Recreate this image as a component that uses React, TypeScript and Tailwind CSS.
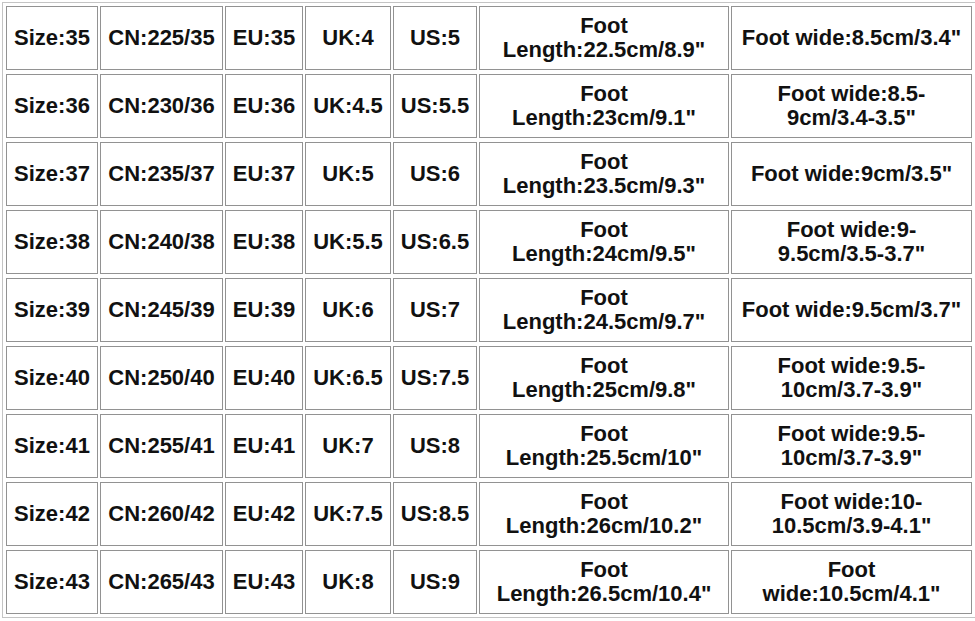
const rows: [string, string, string, string, string, string[], string[]][] = [
  ["Size:35", "CN:225/35", "EU:35", "UK:4", "US:5", ["Foot", 'Length:22.5cm/8.9"'], ['Foot wide:8.5cm/3.4"']],
  ["Size:36", "CN:230/36", "EU:36", "UK:4.5", "US:5.5", ["Foot", 'Length:23cm/9.1"'], ["Foot wide:8.5-", '9cm/3.4-3.5"']],
  ["Size:37", "CN:235/37", "EU:37", "UK:5", "US:6", ["Foot", 'Length:23.5cm/9.3"'], ['Foot wide:9cm/3.5"']],
  ["Size:38", "CN:240/38", "EU:38", "UK:5.5", "US:6.5", ["Foot", 'Length:24cm/9.5"'], ["Foot wide:9-", '9.5cm/3.5-3.7"']],
  ["Size:39", "CN:245/39", "EU:39", "UK:6", "US:7", ["Foot", 'Length:24.5cm/9.7"'], ['Foot wide:9.5cm/3.7"']],
  ["Size:40", "CN:250/40", "EU:40", "UK:6.5", "US:7.5", ["Foot", 'Length:25cm/9.8"'], ["Foot wide:9.5-", '10cm/3.7-3.9"']],
  ["Size:41", "CN:255/41", "EU:41", "UK:7", "US:8", ["Foot", 'Length:25.5cm/10"'], ["Foot wide:9.5-", '10cm/3.7-3.9"']],
  ["Size:42", "CN:260/42", "EU:42", "UK:7.5", "US:8.5", ["Foot", 'Length:26cm/10.2"'], ["Foot wide:10-", '10.5cm/3.9-4.1"']],
  ["Size:43", "CN:265/43", "EU:43", "UK:8", "US:9", ["Foot", 'Length:26.5cm/10.4"'], ["Foot", 'wide:10.5cm/4.1"']],
];

function Cell({ lines }: { lines: string[] }) {
  return (
    <div className="flex flex-col items-center justify-center border border-[#929292] bg-white text-center">
      {lines.map((l, i) => (
        <span key={i} className="whitespace-nowrap leading-[24px]">
          {l}
        </span>
      ))}
    </div>
  );
}

export default function App() {
  return (
    <div className="min-h-screen bg-white">
      <div
        className="ml-[2px] mt-[2px] w-fit border border-[#c4c4c4] p-[3px] text-[22px] font-bold text-[#111]"
        style={{ fontFamily: '"Liberation Sans", Arial, sans-serif' }}
      >
        <div className="grid grid-cols-[92px_123px_78px_86px_84px_250px_241px] auto-rows-[64px] gap-x-[2px] gap-y-[4px]">
          {rows.map((r) => (
            <div key={r[0]} className="contents">
              <Cell lines={[r[0]]} />
              <Cell lines={[r[1]]} />
              <Cell lines={[r[2]]} />
              <Cell lines={[r[3]]} />
              <Cell lines={[r[4]]} />
              <Cell lines={r[5]} />
              <Cell lines={r[6]} />
            </div>
          ))}
        </div>
      </div>
    </div>
  );
}
